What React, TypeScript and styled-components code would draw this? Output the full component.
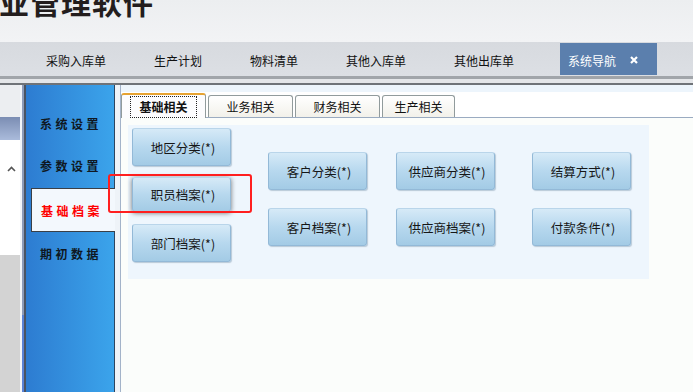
import React from 'react';
import styled, { createGlobalStyle } from 'styled-components';

const GlobalStyle = createGlobalStyle`
  html, body {
    margin: 0;
    padding: 0;
  }
  body {
    width: 693px;
    height: 392px;
    overflow: hidden;
    font-family: "Noto Sans CJK SC", "Noto Sans", sans-serif;
    background: #f9fbf9;
  }
`;

const Page = styled.div`
  width: 693px;
  height: 392px;
  display: flex;
  flex-direction: column;
  overflow: hidden;
`;

const TitleBar = styled.div`
  height: 42px;
  flex: none;
  overflow: hidden;
  background: linear-gradient(#eceef0, #f2f3f5);
`;

const Title = styled.h1`
  margin: -19px 0 0 -1px;
  font-size: 30px;
  font-weight: 700;
  line-height: 40px;
  letter-spacing: 1px;
  color: #231d1d;
  white-space: nowrap;
`;

const TopTabs = styled.div`
  height: 34px;
  flex: none;
  display: flex;
  align-items: flex-end;
  padding-left: 22px;
  background: linear-gradient(#d7dadf, #dcdfe4);
`;

const TopTab = styled.div<{ $active?: boolean }>`
  height: 30px;
  display: flex;
  align-items: center;
  gap: 13px;
  padding: ${(p) => (p.$active ? '2px 18px 0 8px' : '2px 24px 0')};
  margin-left: ${(p) => (p.$active ? '22px' : '0')};
  margin-bottom: 1px;
  font-size: 12px;
  color: ${(p) => (p.$active ? '#ffffff' : '#111111')};
  background: ${(p) => (p.$active ? '#5b7fad' : 'transparent')};
  white-space: nowrap;
`;

const TopRule = styled.div`
  height: 4px;
  flex: none;
  border-top: 3px solid #a1a5aa;
  border-bottom: 2px solid #6f7378;
  background: #e4e6e9;
`;

const Main = styled.div`
  flex: 1;
  display: flex;
  min-height: 0;
`;

const Stub = styled.div`
  width: 20px;
  flex: none;
  display: flex;
  flex-direction: column;
  background: #d3d3d3;
`;

const StubTop = styled.div`
  height: 32px;
  background: #eceef1;
`;

const StubHeader = styled.div`
  height: 23px;
  background: linear-gradient(#7b8db3, #aabbdb);
`;

const StubBody = styled.div`
  height: 115px;
  background: #ffffff;
  padding: 13px 0 0 7px;
  box-sizing: border-box;
`;

const Splitter = styled.div`
  width: 6px;
  flex: none;
  display: flex;
`;

const SplitLight = styled.div`
  width: 2px;
  background: #f3f5f8;
`;

const SplitTrack = styled.div`
  width: 2px;
  background: linear-gradient(#8d9bb8 0, #8d9bb8 230px, #5a82d6 230px);
`;

const SplitDark = styled.div`
  width: 2px;
  background: #4b5462;
`;

const Nav = styled.nav`
  width: 89px;
  flex: none;
  box-sizing: border-box;
  padding-top: 17px;
  display: flex;
  flex-direction: column;
  background: linear-gradient(90deg, #2d7cd1, #3ba4eb);
  border-right: 1px solid #2c4560;
`;

const NavItem = styled.div<{ $active?: boolean }>`
  height: ${(p) => (p.$active ? '44px' : '42px')};
  margin: ${(p) => (p.$active ? '2px -1px 0 5px' : '0')};
  padding-left: ${(p) => (p.$active ? '9px' : '14px')};
  box-sizing: border-box;
  display: flex;
  align-items: center;
  font-size: 12px;
  font-weight: 700;
  letter-spacing: 3.5px;
  color: ${(p) => (p.$active ? '#ff0000' : '#0f1822')};
  background: ${(p) => (p.$active ? '#f3f8fd' : 'transparent')};
  border: ${(p) => (p.$active ? '1px solid #3a3f46' : 'none')};
  border-right: none;
`;

const NavGap = styled.div`
  width: 5px;
  flex: none;
  background: #eef3f8;
`;

const Content = styled.section`
  flex: 1;
  display: flex;
  flex-direction: column;
  border-left: 1px solid #a3b3c9;
  background: #fafcfa;
`;

const ContentBand = styled.div`
  height: 7px;
  background: #edf5fc;
`;

const TabStrip = styled.div`
  height: 25px;
  display: flex;
  align-items: flex-end;
  gap: 2px;
  background: #ffffff;
  border-bottom: 1px solid #9aabc1;
`;

const PageTab = styled.div<{ $active?: boolean; $w: number }>`
  width: ${(p) => p.$w}px;
  height: ${(p) => (p.$active ? '25px' : '22px')};
  margin-bottom: ${(p) => (p.$active ? '-1px' : '0')};
  box-sizing: border-box;
  display: flex;
  align-items: center;
  justify-content: center;
  font-size: 12px;
  font-weight: ${(p) => (p.$active ? 700 : 400)};
  color: #111111;
  border: 1px solid #919b9c;
  border-bottom: none;
  border-top: ${(p) => (p.$active ? '2px solid #e6a332' : '1px solid #919b9c')};
  border-radius: 3px 3px 0 0;
  background: ${(p) =>
    p.$active ? '#fcfcfe' : 'linear-gradient(#ffffff, #f2f1ea)'};
`;

const Focus = styled.span`
  padding: 1px 8px 2px;
  outline: 1px dotted #222;
`;

const TabBody = styled.div`
  flex: 1;
  padding: 7px 44px 0 7px;
  background: #fbfdfb;
`;

const Panel = styled.div`
  height: 154px;
  display: flex;
  padding-left: 4px;
  background: #eef6fd;
`;

const Column = styled.div<{ $ml: number; $top: number; $gap: number }>`
  width: 99px;
  margin-left: ${(p) => p.$ml}px;
  padding-top: ${(p) => p.$top}px;
  display: flex;
  flex-direction: column;
  gap: ${(p) => p.$gap}px;
`;

const ButtonWrap = styled.div`
  position: relative;
`;

const Mark = styled.div`
  position: absolute;
  left: -24px;
  top: -2px;
  width: 144px;
  height: 39px;
  box-sizing: border-box;
  border: 2px solid #ff1f1f;
  border-radius: 3px;
  pointer-events: none;
`;

const ArchiveButton = styled.button<{ $hover?: boolean }>`
  width: 99px;
  height: ${(p) => (p.$hover ? '35px' : '38px')};
  margin: ${(p) => (p.$hover ? '1px 0 2px' : '0')};
  padding: 0 0 0 3px;
  display: flex;
  align-items: center;
  justify-content: center;
  font-family: inherit;
  font-size: 12.5px;
  color: #161616;
  border: 1px solid #93b9d7;
  border-top-color: #b9d5ea;
  border-radius: 3px;
  background: linear-gradient(#d6eaf7, #b7d8ee 50%, #a3cbe5);
  box-shadow: ${(p) =>
    p.$hover
      ? '0 1px 5px rgba(0, 0, 0, 0.55)'
      : '1px 1px 1px rgba(90, 120, 150, 0.35)'};
  cursor: pointer;
  white-space: nowrap;
`;

const Chevron = () => (
  <svg width="9" height="6" viewBox="0 0 9 6">
    <path d="M1 5 L4.5 1.5 L8 5" fill="none" stroke="#555" strokeWidth="1.6" />
  </svg>
);

const CloseIcon = () => (
  <svg width="10" height="10" viewBox="0 0 10 10">
    <path d="M2 2 L8 8 M8 2 L2 8" stroke="#ffffff" strokeWidth="2.2" />
  </svg>
);

const topTabs = ['采购入库单', '生产计划', '物料清单', '其他入库单', '其他出库单'];
const navItems = ['系统设置', '参数设置', '基础档案', '期初数据'];
const pageTabs = [
  { label: '基础相关', w: 85 },
  { label: '业务相关', w: 85 },
  { label: '财务相关', w: 85 },
  { label: '生产相关', w: 73 },
];

const columns = [
  { ml: 0, top: 3, gap: 10, items: ['地区分类(*)', '职员档案(*)', '部门档案(*)'] },
  { ml: 37, top: 27, gap: 18, items: ['客户分类(*)', '客户档案(*)'] },
  { ml: 29, top: 27, gap: 18, items: ['供应商分类(*)', '供应商档案(*)'] },
  { ml: 37, top: 27, gap: 18, items: ['结算方式(*)', '付款条件(*)'] },
];

const App: React.FC = () => {
  return (
    <Page>
      <GlobalStyle />
      <TitleBar>
        <Title>业管理软件</Title>
      </TitleBar>
      <TopTabs>
        {topTabs.map((t) => (
          <TopTab key={t}>{t}</TopTab>
        ))}
        <TopTab $active>
          系统导航
          <CloseIcon />
        </TopTab>
      </TopTabs>
      <TopRule />
      <Main>
        <Stub>
          <StubTop />
          <StubHeader />
          <StubBody>
            <Chevron />
          </StubBody>
        </Stub>
        <Splitter>
          <SplitLight />
          <SplitTrack />
          <SplitDark />
        </Splitter>
        <Nav>
          {navItems.map((n) => (
            <NavItem key={n} $active={n === '基础档案'}>
              {n}
            </NavItem>
          ))}
        </Nav>
        <NavGap />
        <Content>
          <ContentBand />
          <TabStrip>
            {pageTabs.map((t, i) => (
              <PageTab key={t.label} $w={t.w} $active={i === 0}>
                {i === 0 ? <Focus>{t.label}</Focus> : t.label}
              </PageTab>
            ))}
          </TabStrip>
          <TabBody>
            <Panel>
              {columns.map((c, ci) => (
                <Column key={ci} $ml={c.ml} $top={c.top} $gap={c.gap}>
                  {c.items.map((label) =>
                    label === '职员档案(*)' ? (
                      <ButtonWrap key={label}>
                        <ArchiveButton $hover>{label}</ArchiveButton>
                        <Mark />
                      </ButtonWrap>
                    ) : (
                      <ArchiveButton key={label}>{label}</ArchiveButton>
                    )
                  )}
                </Column>
              ))}
            </Panel>
          </TabBody>
        </Content>
      </Main>
    </Page>
  );
};

export default App;
